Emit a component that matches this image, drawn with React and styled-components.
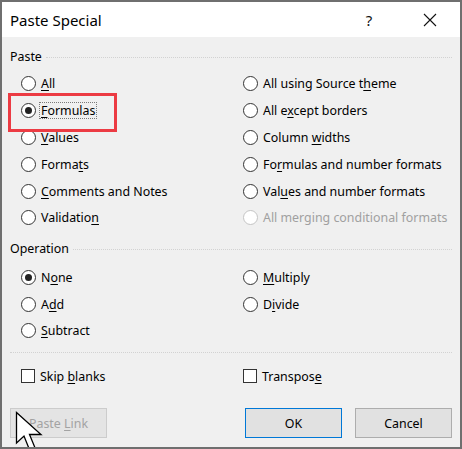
import React from "react";
import styled, { createGlobalStyle } from "styled-components";

const Global = createGlobalStyle`
  html, body {
    margin: 0;
    padding: 0;
    background: #ffffff;
  }
  body {
    font-family: "Noto Sans", "Open Sans", sans-serif;
  }
`;

const Window = styled.div`
  position: relative;
  width: 462px;
  height: 449px;
  box-sizing: border-box;
  border: 2px solid #6f6f6f;
  background: #f0f0f0;
  display: flex;
  flex-direction: column;
  overflow: hidden;
  color: #000;
  font-size: 12.4px;
`;

const TitleBar = styled.div`
  height: 35px;
  background: #ffffff;
  display: flex;
  align-items: center;
  padding-left: 8px;
`;

const Title = styled.div`
  flex: 1;
  font-size: 15px;
  color: #000;
`;

const HelpButton = styled.div`
  width: 20px;
  font-size: 15px;
  margin-right: 44px;
  text-align: center;
  color: #111;
`;

const CloseButton = styled.div`
  width: 14px;
  height: 14px;
  margin-right: 23px;
  display: flex;
`;

const Body = styled.div`
  flex: 1;
  display: flex;
  flex-direction: column;
  padding: 0 8px 9px 8px;
`;

const GroupHeader = styled.div`
  height: 16px;
  margin-top: ${(p) => p.$top}px;
  display: flex;
  align-items: center;
  gap: 4px;
  line-height: 16px;

  &::after {
    content: "";
    flex: 1;
    border-top: 1px dotted #d2d2d2;
    margin-top: 1px;
  }
`;

const OptionGrid = styled.div`
  margin-top: ${(p) => p.$top}px;
  padding-left: 11px;
  display: grid;
  grid-template-columns: 222px 1fr;
  grid-auto-rows: ${(p) => p.$row}px;
`;

const Option = styled.div`
  display: flex;
  align-items: center;
  gap: 5px;
  white-space: nowrap;
  color: ${(p) => (p.$disabled ? "#a0a0a0" : "#000")};
`;

const Radio = styled.span`
  width: 13px;
  height: 13px;
  border-radius: 50%;
  border: 1px solid ${(p) => (p.$disabled ? "#c4c4c4" : "#333333")};
  background: #ffffff;
  display: flex;
  align-items: center;
  justify-content: center;
  flex: none;

  &::after {
    content: "";
    width: 7px;
    height: 7px;
    border-radius: 50%;
    background: #222;
    display: ${(p) => (p.$checked ? "block" : "none")};
  }
`;

const Check = styled.span`
  width: 12px;
  height: 12px;
  border: 1px solid #333333;
  background: #ffffff;
  flex: none;
`;

const Text = styled.span`
  line-height: 15px;
  padding: 0 1px;
  outline: ${(p) => (p.$focus ? "1px dotted #7a7a7a" : "none")};
  outline-offset: 0;
  margin-left: -1px;
`;

const Key = styled.u`
  text-decoration: underline;
  text-underline-offset: 2px;
  text-decoration-thickness: 1px;
`;

const Separator = styled.div`
  margin-top: 8px;
  border-top: 1px dotted #d2d2d2;
`;

const CheckRow = styled.div`
  margin-top: 15px;
  height: 16px;
  padding-left: 11px;
  display: grid;
  grid-template-columns: 222px 1fr;
`;

const Footer = styled.div`
  margin-top: auto;
  display: flex;
  align-items: center;
  gap: 13px;
`;

const Button = styled.button`
  width: 97px;
  height: 30px;
  box-sizing: border-box;
  font-family: inherit;
  font-size: 12.4px;
  background: ${(p) => (p.disabled ? "#e4e4e4" : "#e1e1e1")};
  color: ${(p) => (p.disabled ? "#a3a3a3" : "#000")};
  border: 1px solid
    ${(p) => (p.$primary ? "#0078d7" : p.disabled ? "#cccccc" : "#adadad")};
  padding: 0;
  margin-left: ${(p) => (p.$push ? "auto" : "0")};
`;

const Highlight = styled.div`
  position: absolute;
  left: 6px;
  top: 91px;
  width: 103px;
  height: 33px;
  border: 3px solid #ec3b43;
  pointer-events: none;
`;

const Cursor = styled.svg`
  position: absolute;
  left: 13px;
  top: 409px;
  pointer-events: none;
`;

function label(text, key) {
  if (key < 0) return text;
  return (
    <>
      {text.slice(0, key)}
      <Key>{text[key]}</Key>
      {text.slice(key + 1)}
    </>
  );
}

const pasteOptions = [
  ["All", 0, false],
  ["All using Source theme", 18, false],
  ["Formulas", 0, true],
  ["All except borders", 5, false],
  ["Values", 0, false],
  ["Column widths", 7, false],
  ["Formats", 5, false],
  ["Formulas and number formats", 2, false],
  ["Comments and Notes", 0, false],
  ["Values and number formats", 3, false],
  ["Validation", 9, false],
  ["All merging conditional formats", -1, false, true],
];

const operationOptions = [
  ["None", 1, true],
  ["Multiply", 0, false],
  ["Add", 1, false],
  ["Divide", 1, false],
  ["Subtract", 0, false],
];

export default function App() {
  return (
    <>
      <Global />
      <Window>
        <TitleBar>
          <Title>Paste Special</Title>
          <HelpButton>?</HelpButton>
          <CloseButton>
            <svg width="14" height="14" viewBox="0 0 14 14">
              <path d="M1 1 L13 13 M13 1 L1 13" stroke="#111" strokeWidth="1.1" />
            </svg>
          </CloseButton>
        </TitleBar>
        <Body>
          <GroupHeader $top={12}>Paste</GroupHeader>
          <OptionGrid $top={5.6} $row={26.8}>
            {pasteOptions.map(([text, key, checked, disabled]) => (
              <Option key={text} $disabled={disabled}>
                <Radio $checked={checked} $disabled={disabled} />
                <Text $focus={text === "Formulas"}>{label(text, key)}</Text>
              </Option>
            ))}
          </OptionGrid>

          <GroupHeader $top={9.6}>Operation</GroupHeader>
          <OptionGrid $top={7.75} $row={26.5}>
            {operationOptions.map(([text, key, checked]) => (
              <Option key={text}>
                <Radio $checked={checked} />
                <Text>{label(text, key)}</Text>
              </Option>
            ))}
          </OptionGrid>

          <Separator />
          <CheckRow>
            <Option>
              <Check />
              <Text>{label("Skip blanks", 5)}</Text>
            </Option>
            <Option>
              <Check />
              <Text>{label("Transpose", 8)}</Text>
            </Option>
          </CheckRow>

          <Footer>
            <Button disabled>
              Paste <Key as="span">L</Key>ink
            </Button>
            <Button $primary $push>OK</Button>
            <Button>Cancel</Button>
          </Footer>
        </Body>
        <Highlight />
        <Cursor width="30" height="44" viewBox="0 0 30 44">
          <path
            d="M1.5 1.5 L1.5 32 L9 25 L15 40 L20.5 38 L14.5 23.5 L26 23.5 Z"
            fill="#ffffff"
            stroke="#000000"
            strokeWidth="1.3"
            strokeLinejoin="miter"
          />
        </Cursor>
      </Window>
    </>
  );
}
